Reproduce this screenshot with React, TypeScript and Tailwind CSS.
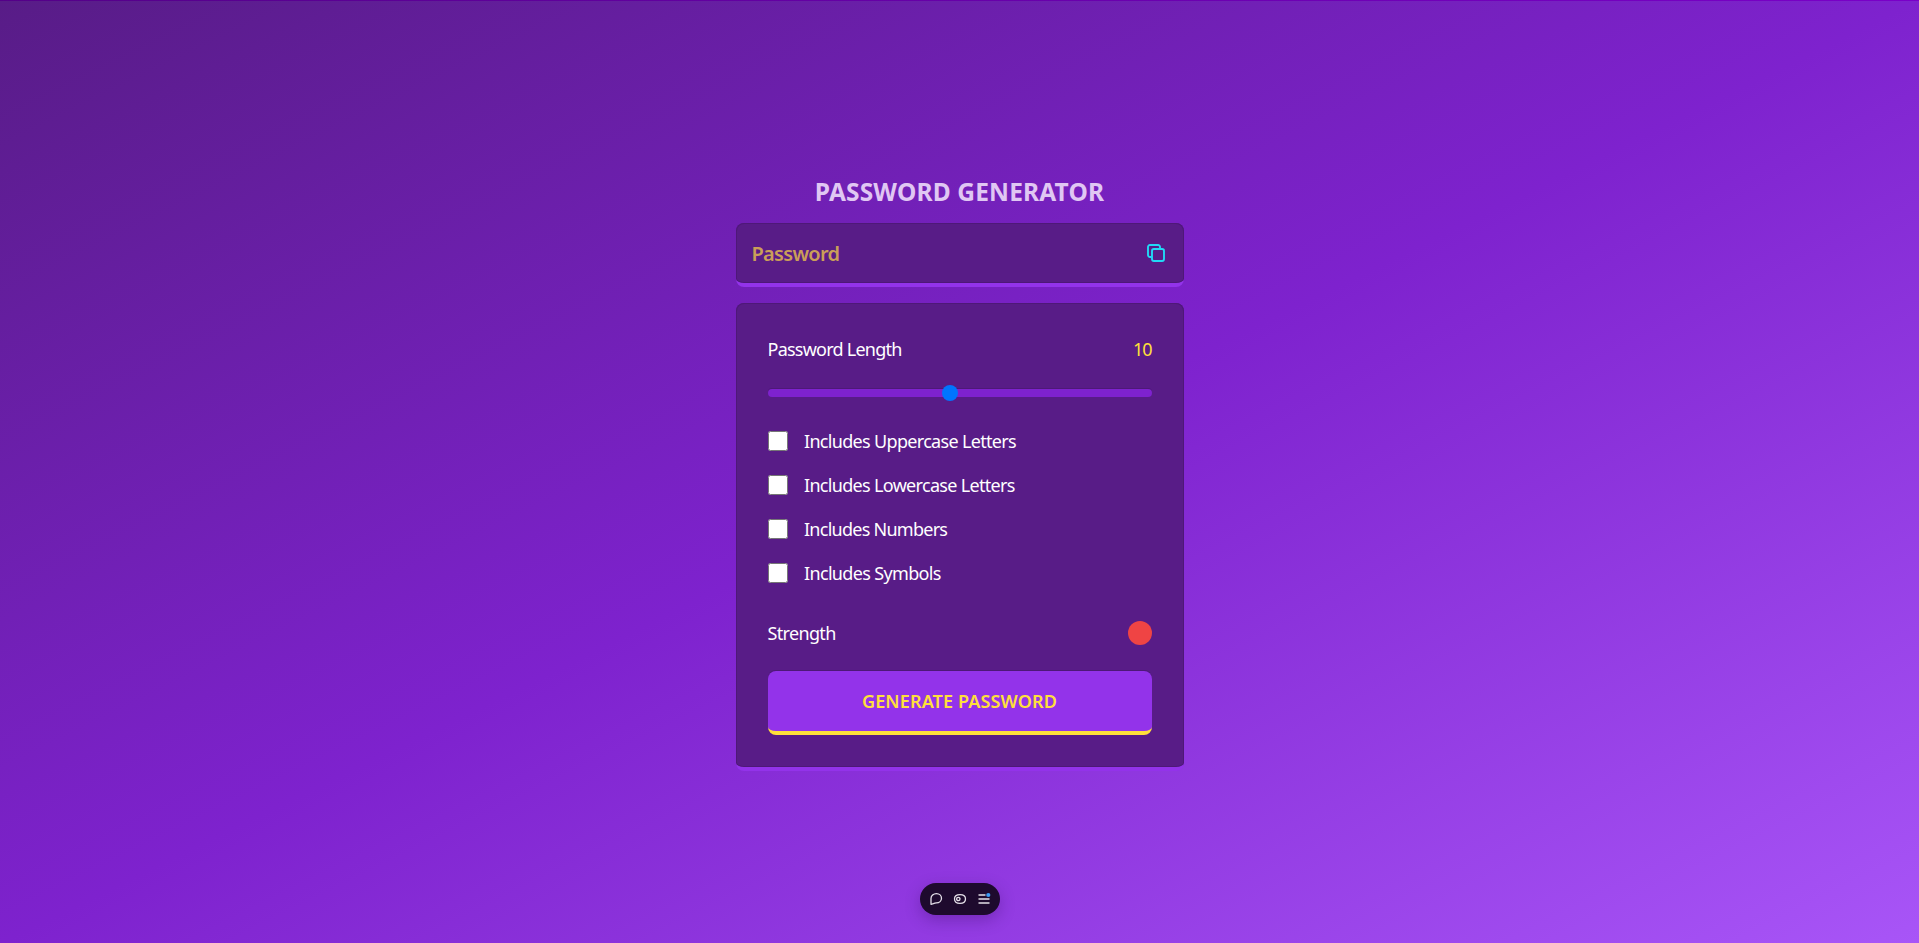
import { useState } from "react";

const OPTIONS = [
  { label: "Includes Uppercase Letters", spacing: "tracking-[-0.68px]" },
  { label: "Includes Lowercase Letters", spacing: "tracking-[-0.68px]" },
  { label: "Includes Numbers", spacing: "tracking-[-0.74px]" },
  { label: "Includes Symbols", spacing: "tracking-[-0.66px]" },
];

const MAX_LENGTH = 20;
const MIN_LENGTH = 1;

function CopyIcon() {
  return (
    <svg width="20" height="20" viewBox="0 0 20 20" fill="none" stroke="currentColor" strokeWidth="1.9" strokeLinejoin="round">
      <rect x="6" y="6" width="12" height="12" rx="1.9" />
      <path d="M5.5 14H3.9A1.9 1.9 0 0 1 2 12.1V3.9A1.9 1.9 0 0 1 3.9 2h8.2A1.9 1.9 0 0 1 14 3.9V5.5" />
    </svg>
  );
}

function Toolbar() {
  return (
    <div className="fixed bottom-7 left-[920px] flex h-8 w-20 items-center justify-between rounded-full bg-[#1e0a2e] px-[9px] text-[#e4dfe8] shadow-[0_5px_16px_rgba(40,0,80,0.28)]">
      <svg width="14" height="14" viewBox="0 0 14 14" fill="none" stroke="currentColor" strokeWidth="1.3" strokeLinejoin="round">
        <path d="M2 12.3V6.6C2 3.8 4.4 1.7 7.4 1.7S12.5 3.8 12.5 6.3 10.3 10.9 7.4 10.9C6 10.9 5.2 11.2 4.4 11.6Z" />
      </svg>
      <svg width="14" height="14" viewBox="0 0 14 14" fill="none" stroke="currentColor" strokeWidth="1.3">
        <path d="M7 2.7C10.8 2.7 12.5 4.3 12.5 7S10.8 11.3 7 11.3 1.5 9.7 1.5 7 3.2 2.7 7 2.7Z" />
        <circle cx="5.3" cy="7" r="1.7" />
      </svg>
      <svg width="14" height="14" viewBox="0 0 14 14" fill="none">
        <path d="M1.5 3h7M1.5 7h11M1.5 11h11" stroke="currentColor" strokeWidth="1.3" />
        <circle cx="11.3" cy="3" r="2.1" fill="#3b9cf5" />
      </svg>
    </div>
  );
}

export default function App() {
  const [length, setLength] = useState(10);
  const [checked, setChecked] = useState<boolean[]>([false, false, false, false]);

  return (
    <div className="flex h-screen w-full flex-col items-center overflow-hidden bg-[linear-gradient(to_bottom_right,#581c87,#7e22ce,#a855f7)] font-['Noto_Sans',sans-serif] text-[18px] text-white">
      <div className="h-px w-full shrink-0 bg-[linear-gradient(to_right,#540088,#7a00c8)]" />
      <main className="flex w-[448px] flex-col pt-[175px]">
        <h1 className="mb-[15px] h-8 whitespace-nowrap text-center text-[24.5px] leading-8 font-bold tracking-[0.15px] text-[#e0c7f3]">
          PASSWORD GENERATOR
        </h1>

        <div className="mb-4 flex h-16 items-center justify-between rounded-lg border-b-4 border-[#9333ea] bg-[#581c87] pr-[18px] pl-4 shadow-[inset_0_0_0_1px_#4e1878]">
          <span className="pt-[2px] text-[20px] font-semibold tracking-[-0.7px] text-[#ca9f58]">Password</span>
          <button className="text-[#22d8f5]" aria-label="Copy">
            <CopyIcon />
          </button>
        </div>

        <section className="flex h-[468px] flex-col rounded-lg border-b-4 border-[#9333ea] bg-[#581c87] px-8 pt-8 shadow-[inset_0_0_0_1px_#4e1878]">
          <div className="flex h-7 items-center justify-between">
            <span className="tracking-[-0.76px]">Password Length</span>
            <span className="tracking-[-1px] text-[#ffe03a]">{length}</span>
          </div>

          <input
            type="range"
            min={MIN_LENGTH}
            max={MAX_LENGTH}
            value={length}
            aria-label="Length"
            onChange={(e) => setLength(Number(e.target.value))}
            className="mt-[26px] h-2 w-full shrink-0 cursor-pointer appearance-none rounded-lg bg-[#7e22ce] shadow-[0_-1px_0_#4e1878] [&::-webkit-slider-thumb]:size-4 [&::-webkit-slider-thumb]:appearance-none [&::-webkit-slider-thumb]:rounded-full [&::-webkit-slider-thumb]:bg-[#0075ff]"
          />

          <div className="mt-[30px] flex flex-col gap-4">
            {OPTIONS.map((option, i) => (
              <label key={option.label} className="flex h-7 items-center gap-[16.5px]">
                <input
                  type="checkbox"
                  checked={checked[i]}
                  onChange={() => setChecked(checked.map((c, j) => (j === i ? !c : c)))}
                  className="size-5"
                />
                <span className={option.spacing}>{option.label}</span>
              </label>
            ))}
          </div>

          <div className="mt-8 flex h-7 items-center justify-between">
            <span className="tracking-[-0.66px]">Strength</span>
            <span className="size-6 rounded-full bg-[#ef4444]" />
          </div>

          <button className="mt-6 h-16 w-full shrink-0 rounded-lg border-b-4 border-[#ffe03a] bg-[#9333ea] font-semibold tracking-[0.14px] text-[#ffe03a] shadow-[0_-1px_0_#4e1878]">
            GENERATE PASSWORD
          </button>
        </section>
      </main>
      <Toolbar />
    </div>
  );
}
